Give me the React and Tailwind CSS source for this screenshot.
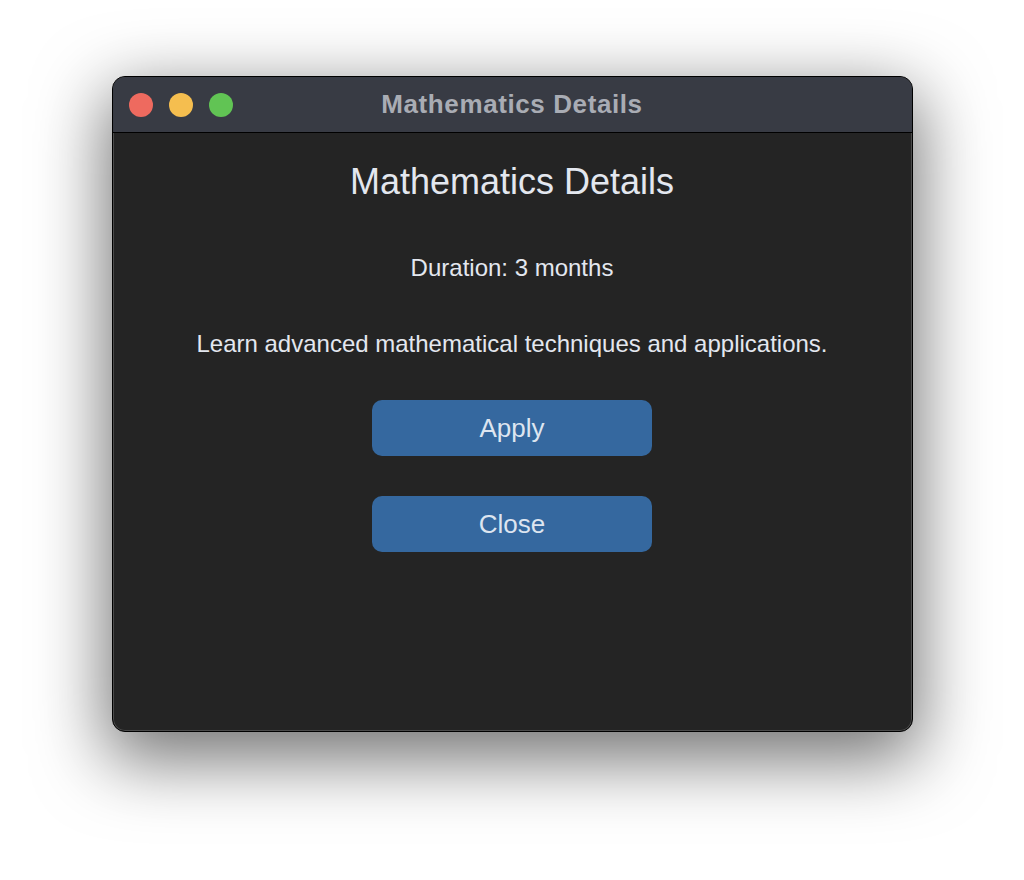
import React from 'react';

const font = { fontFamily: '"Liberation Sans", Arial, sans-serif' };

function TrafficLights() {
  return (
    <div className="flex items-center gap-4 pl-4">
      <span className="block w-6 h-6 rounded-full bg-[#ee6a5f]" />
      <span className="block w-6 h-6 rounded-full bg-[#f5be4f]" />
      <span className="block w-6 h-6 rounded-full bg-[#61c454]" />
    </div>
  );
}

export default function App() {
  return (
    <div className="w-[1024px] h-[880px] bg-white pt-[76px]" style={font}>
      <div className="mx-auto w-[801px] h-[656px] rounded-[13px] border border-black bg-[#242424] overflow-hidden flex flex-col shadow-[0_22px_70px_6px_rgba(0,0,0,0.55),inset_0_0_0_1px_rgba(255,255,255,0.18)]">
        {/* title bar */}
        <div className="relative h-[56px] shrink-0 bg-[#383b44] border-b border-black flex items-center">
          <TrafficLights />
          <div className="absolute inset-0 flex items-center justify-center pointer-events-none">
            <span className="text-[26px] font-bold tracking-[0.6px] text-[#a9acb4]">Mathematics Details</span>
          </div>
        </div>

        {/* content */}
        <div className="flex-1 flex flex-col items-center pt-[27px] text-[#e3e7ef]">
          <h1 className="text-[36px] leading-[44px]">Mathematics Details</h1>
          <p className="mt-[49px] text-[24px] leading-[30px]">Duration: 3 months</p>
          <p className="mt-[46px] text-[24px] leading-[30px]">Learn advanced mathematical techniques and applications.</p>
          <button className="mt-[41px] w-[280px] h-[56px] rounded-[10px] bg-[#35689f] text-[26px] text-[#dde5f0]">
            Apply
          </button>
          <button className="mt-10 w-[280px] h-[56px] rounded-[10px] bg-[#35689f] text-[26px] text-[#dde5f0]">
            Close
          </button>
        </div>
      </div>
    </div>
  );
}
